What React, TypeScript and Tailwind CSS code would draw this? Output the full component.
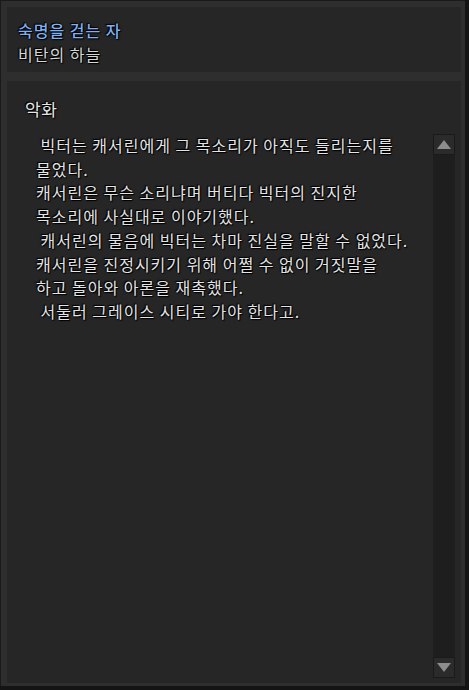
import React from 'react';

const lines = [
  ' 빅터는 캐서린에게 그 목소리가 아직도 들리는지를',
  '물었다.',
  '캐서린은 무슨 소리냐며 버티다 빅터의 진지한',
  '목소리에 사실대로 이야기했다.',
  ' 캐서린의 물음에 빅터는 차마 진실을 말할 수 없었다.',
  '캐서린을 진정시키기 위해 어쩔 수 없이 거짓말을',
  '하고 돌아와 아론을 재촉했다.',
  ' 서둘러 그레이스 시티로 가야 한다고.',
];

const font = "font-['Noto_Sans_CJK_KR','Noto_Sans',sans-serif]";
const shadow = '[text-shadow:0_0_2px_#000,1px_1px_1px_#000,-1px_-1px_1px_#000]';

export default function App() {
  return (
    <div className={`w-[469px] h-[690px] bg-[#141414] ${font}`}>
      <div className="w-[465px] h-[686px] bg-[#2e2e2e] border-l border-t border-[#1a1a1a] pl-[6px] pt-[6px] pr-[4px] flex flex-col">
        {/* 제목 */}
        <div className="h-[65px] bg-[#262626] pl-[11px] pt-[11px]">
          <p className={`text-[16px] leading-[24px] tracking-[1px] text-[#7fb0f0] font-medium ${shadow}`}>숙명을 걷는 자</p>
          <p className={`text-[16px] leading-[24px] tracking-[1px] text-[#d6d6d6] ${shadow}`}>비탄의 하늘</p>
        </div>

        {/* 본문 */}
        <div className="mt-[9px] h-[602px] bg-[#262626] flex flex-col">
          <h3 className={`pl-[18px] pt-[15px] text-[17px] leading-[26px] tracking-[0.5px] text-[#e6e6e6] ${shadow}`}>악화</h3>
          <div className="flex flex-1 mt-[12px]">
            <div className="flex-1 pl-[29px]">
              {lines.map((t, i) => (
                <p key={i} className={`whitespace-pre text-[16px] leading-[23.7px] tracking-[1px] text-[#e4e4e4] ${shadow}`}>{t}</p>
              ))}
            </div>
            <div className="w-[22px] mr-[6px] mb-[5px] flex flex-col bg-[#1e1e1e]">
              <div className="h-[21px] bg-[#2b2b2b] border border-[#1a1a1a] flex items-center justify-center">
                <div className="w-0 h-0 border-l-[7px] border-r-[7px] border-b-[9px] border-l-transparent border-r-transparent border-b-[#8d8d8d]" />
              </div>
              <div className="flex-1" />
              <div className="h-[21px] bg-[#2b2b2b] border border-[#1a1a1a] flex items-center justify-center">
                <div className="w-0 h-0 border-l-[7px] border-r-[7px] border-t-[9px] border-l-transparent border-r-transparent border-t-[#8d8d8d]" />
              </div>
            </div>
          </div>
        </div>
      </div>
    </div>
  );
}
